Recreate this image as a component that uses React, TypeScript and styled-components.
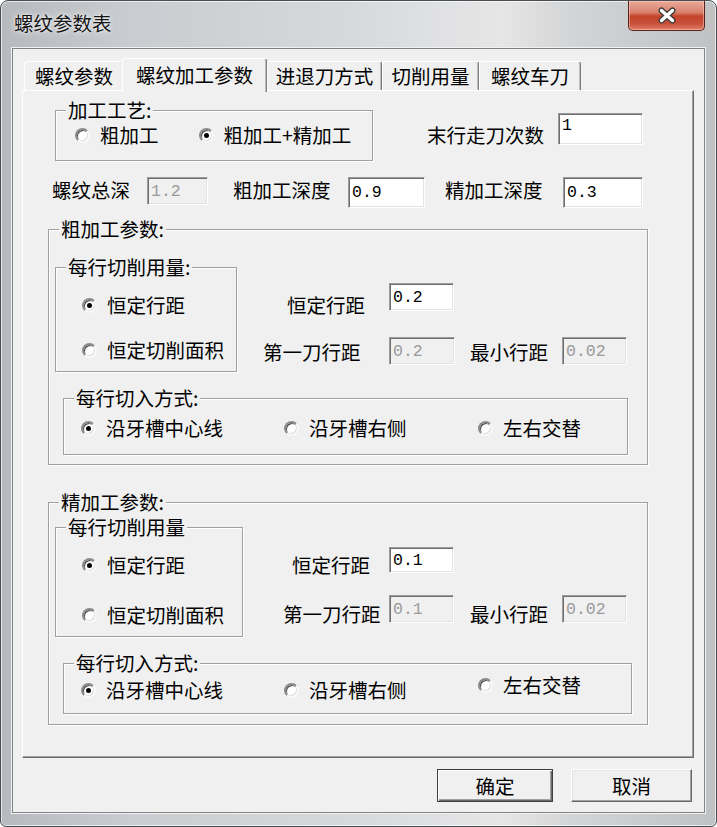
import React from 'react';
import styled, { createGlobalStyle, css } from 'styled-components';

const GlobalStyle = createGlobalStyle`
  *, *::before, *::after { box-sizing: border-box; }
  html, body { margin: 0; padding: 0; background: #ffffff; }
  body { font-family: 'Noto Sans CJK SC', 'Noto Sans', sans-serif; }
`;

const cjk = `'Noto Sans CJK SC', 'Noto Sans', sans-serif`;

const Window = styled.div`
  width: 717px;
  height: 827px;
  display: flex;
  flex-direction: column;
  border: 1px solid #4a4f54;
  border-radius: 8px 8px 6px 6px;
  background: linear-gradient(90deg, #b6babe 0%, #c9ccd0 18%, #d6d8da 48%, #e6e6e7 70%, #d3d4d5 80%, #bfc1c3 100%);
  box-shadow: inset 0 0 0 1px rgba(255, 255, 255, 0.65);
  overflow: hidden;
  color: #000;
  font-family: ${cjk};
  font-size: 19.5px;
`;

const TitleBar = styled.div`
  height: 47px;
  flex: none;
  display: flex;
  align-items: flex-start;
  padding-left: 13px;
`;

const Caption = styled.div`
  margin-top: 12px;
  line-height: 20px;
  color: #151515;
  text-shadow: 0 0 6px rgba(255, 255, 255, 0.95), 0 0 2px rgba(255, 255, 255, 0.9);
`;

const CloseButton = styled.div`
  margin-left: auto;
  margin-right: 11px;
  width: 77px;
  height: 30px;
  display: flex;
  align-items: center;
  justify-content: center;
  border: 1px solid #5b2219;
  border-top: none;
  border-radius: 0 0 5px 5px;
  background: linear-gradient(180deg, #e9a999 0%, #d9806c 40%, #c2442a 52%, #c9503a 78%, #e07e66 100%);
  box-shadow: inset 0 0 0 1px rgba(255, 210, 200, 0.5);
`;

const Client = styled.div`
  flex: 1;
  margin: 0 11px 13px 11px;
  padding: 9px 10px 0 9px;
  display: flex;
  flex-direction: column;
  background: #f0f0f0;
  border: 1px solid #808284;
  box-shadow: 0 0 0 1px #f2f2f2;
`;

const TabStrip = styled.div`
  display: flex;
  align-items: flex-end;
  height: 32px;
  padding-left: 2px;
  position: relative;
  z-index: 1;
`;

const Tab = styled.div<{ $w: number; $active?: boolean }>`
  width: ${(p) => p.$w}px;
  height: ${(p) => (p.$active ? 34 : 29)}px;
  margin-bottom: ${(p) => (p.$active ? -2 : 0)}px;
  margin-left: ${(p) => (p.$active ? -2 : 0)}px;
  padding-bottom: ${(p) => (p.$active ? 2 : 0)}px;
  display: flex;
  align-items: center;
  justify-content: center;
  line-height: 20px;
  white-space: nowrap;
  background: #f0f0f0;
  border-top: 1px solid #ffffff;
  border-left: 1px solid #ffffff;
  border-right: 1px solid #7c7c7c;
  border-radius: 3px 3px 0 0;
  box-shadow: inset -1px 0 0 #c0c0c0;
`;

const TabPanel = styled.div`
  height: 668px;
  flex: none;
  display: flex;
  flex-direction: column;
  align-items: flex-start;
  padding-left: 25px;
  background: #f0f0f0;
  border-top: 1px solid #ffffff;
  border-left: 1px solid #ffffff;
  border-right: 1px solid #696969;
  border-bottom: 1px solid #696969;
  box-shadow: inset -1px -1px 0 #a0a0a0;
`;

const GroupBox = styled.fieldset<{ $w: number; $ml?: number; $mt?: number; $pb?: number }>`
  width: ${(p) => p.$w}px;
  min-width: 0;
  margin: ${(p) => p.$mt ?? 0}px 0 0 ${(p) => p.$ml ?? 0}px;
  padding: 0 0 ${(p) => p.$pb ?? 0}px 0;
  border: 1px solid #a0a0a0;
  box-shadow: inset 1px 1px 0 #ffffff, 1px 1px 0 #ffffff;
`;

const Legend = styled.legend`
  margin-left: 10px;
  padding: 0 2px;
  height: 20px;
  line-height: 20px;
  background: #f0f0f0;
  white-space: nowrap;
`;

const ProcessRow = styled.div`
  display: flex;
  align-items: flex-start;
  margin-top: 9px;
  margin-left: 7px;
`;

const DepthRow = styled.div`
  display: flex;
  align-items: flex-start;
  margin-top: 16px;
`;

const SplitRow = styled.div<{ $mt: number }>`
  display: flex;
  align-items: flex-start;
  margin-top: ${(p) => p.$mt}px;
`;

const FieldColumn = styled.div`
  display: flex;
  flex-direction: column;
`;

const FieldRow = styled.div<{ $mt: number }>`
  display: flex;
  align-items: flex-start;
  margin-top: ${(p) => p.$mt}px;
`;

const Label = styled.span<{ $ml?: number; $mt?: number }>`
  margin-left: ${(p) => p.$ml ?? 0}px;
  margin-top: ${(p) => p.$mt ?? 0}px;
  line-height: 20px;
  white-space: nowrap;
`;

const Field = styled.input<{ $w: number; $h: number; $ml?: number; $mt?: number; $off?: boolean; $lift?: number }>`
  width: ${(p) => p.$w}px;
  height: ${(p) => p.$h}px;
  margin: ${(p) => p.$mt ?? 0}px 0 0 ${(p) => p.$ml ?? 0}px;
  padding: 0 0 ${(p) => p.$lift ?? 0}px 3px;
  border: 1px solid;
  border-color: #9c9c9c #ffffff #ffffff #9c9c9c;
  border-radius: 0;
  box-shadow: inset 1px 1px 0 #6e6e6e, inset -1px -1px 0 #e3e3e3;
  background: ${(p) => (p.$off ? '#f0f0f0' : '#ffffff')};
  color: ${(p) => (p.$off ? '#9a9a9a' : '#000000')};
  font-family: 'Liberation Mono', 'DejaVu Sans Mono', monospace;
  font-size: 16.5px;
  outline: none;
`;

const RadioLine = styled.div`
  display: flex;
  padding: 5px 0 15px 19px;
`;

const RadioColumn = styled.div<{ $gap: number }>`
  display: flex;
  flex-direction: column;
  gap: ${(p) => p.$gap}px;
  padding: 18px 0 11px 26px;
`;

const EntryGrid = styled.div<{ $pt: number; $pb: number }>`
  display: grid;
  grid-template-columns: 203px 194px auto;
  align-items: start;
  padding: ${(p) => p.$pt}px 0 ${(p) => p.$pb}px 17px;
`;

const RadioItem = styled.label<{ $ml?: number; $dy?: number }>`
  display: inline-flex;
  align-items: center;
  gap: 10px;
  height: 20px;
  line-height: 20px;
  margin-left: ${(p) => p.$ml ?? 0}px;
  margin-top: ${(p) => p.$dy ?? 0}px;
  white-space: nowrap;
`;

const RadioMark = styled.span<{ $checked?: boolean }>`
  flex: none;
  width: 15px;
  height: 15px;
  display: flex;
  align-items: center;
  justify-content: center;
  border-radius: 50%;
  background: #ffffff;
  border: 2px solid;
  border-color: #8a8a8a #f8f8f8 #f8f8f8 #8a8a8a;
  box-shadow: inset 1px 1px 0 #4a4a4a, inset -1px -1px 0 #dcdcdc;

  &::after {
    content: '';
    display: ${(p) => (p.$checked ? 'block' : 'none')};
    width: 5px;
    height: 5px;
    border-radius: 50%;
    background: #000000;
  }
`;

const ButtonRow = styled.div`
  display: flex;
  justify-content: flex-end;
  gap: 18px;
  margin-top: 11px;
  padding-right: 2px;
`;

const DialogButton = styled.button<{ $w: number; $default?: boolean }>`
  width: ${(p) => p.$w}px;
  height: 33px;
  padding: 0;
  font-family: ${cjk};
  font-size: 19.5px;
  line-height: 20px;
  color: #000;
  background: #f0f0f0;
  border: 1px solid;
  border-color: #ffffff #696969 #696969 #ffffff;
  box-shadow: inset -1px -1px 0 #a0a0a0, inset 1px 1px 0 #e3e3e3;

  ${(p) =>
    p.$default &&
    css`
      border-color: #3e3e3e;
      box-shadow: inset 1px 1px 0 #ffffff, inset -1px -1px 0 #696969, inset -2px -2px 0 #a0a0a0;
    `}
`;

type RadioProps = { checked?: boolean; ml?: number; dy?: number; children: React.ReactNode };

const Radio = ({ checked, ml, dy, children }: RadioProps) => (
  <RadioItem $ml={ml} $dy={dy}>
    <RadioMark $checked={checked} />
    {children}
  </RadioItem>
);

const CloseGlyph = () => (
  <svg width="22" height="17" viewBox="0 0 22 17">
    <path d="M5.5 3.5 L16.5 13.5 M16.5 3.5 L5.5 13.5" stroke="#3a3a3a" strokeWidth="6" strokeLinecap="round" />
    <path d="M5.5 3.5 L16.5 13.5 M16.5 3.5 L5.5 13.5" stroke="#ffffff" strokeWidth="3.4" strokeLinecap="round" />
  </svg>
);

const tabs = [
  { label: '螺纹参数', w: 100 },
  { label: '螺纹加工参数', w: 145, active: true },
  { label: '进退刀方式', w: 115 },
  { label: '切削用量', w: 97 },
  { label: '螺纹车刀', w: 102 },
];

export default function App() {
  return (
    <>
      <GlobalStyle />
      <Window>
        <TitleBar>
          <Caption>螺纹参数表</Caption>
          <CloseButton>
            <CloseGlyph />
          </CloseButton>
        </TitleBar>

        <Client>
          <TabStrip>
            {tabs.map((t) => (
              <Tab key={t.label} $w={t.w} $active={t.active}>
                {t.label}
              </Tab>
            ))}
          </TabStrip>

          <TabPanel>
            <ProcessRow>
              <GroupBox $w={318}>
                <Legend>加工工艺:</Legend>
                <RadioLine>
                  <Radio>粗加工</Radio>
                  <Radio checked ml={40}>
                    粗加工+精加工
                  </Radio>
                </RadioLine>
              </GroupBox>
              <Label $ml={54} $mt={25}>
                末行走刀次数
              </Label>
              <Field $w={85} $h={32} $ml={14} $mt={13} $lift={8} readOnly defaultValue="1" />
            </ProcessRow>

            <DepthRow>
              <Label $ml={4} $mt={3}>
                螺纹总深
              </Label>
              <Field $w={61} $h={28} $ml={17} $off readOnly defaultValue="1.2" />
              <Label $ml={25} $mt={3}>
                粗加工深度
              </Label>
              <Field $w={77} $h={31} $ml={17.5} readOnly defaultValue="0.9" />
              <Label $ml={20} $mt={3}>
                精加工深度
              </Label>
              <Field $w={80} $h={31} $ml={20.5} readOnly defaultValue="0.3" />
            </DepthRow>

            {/* 粗加工参数 */}
            <GroupBox $w={600} $mt={11} $pb={9}>
              <Legend>粗加工参数:</Legend>
              <SplitRow $mt={18}>
                <GroupBox $w={182} $ml={6}>
                  <Legend>每行切削用量:</Legend>
                  <RadioColumn $gap={25}>
                    <Radio checked>恒定行距</Radio>
                    <Radio>恒定切削面积</Radio>
                  </RadioColumn>
                </GroupBox>
                <FieldColumn>
                  <FieldRow $mt={26}>
                    <Label $ml={50} $mt={12}>
                      恒定行距
                    </Label>
                    <Field $w={65} $h={28} $ml={24} readOnly defaultValue="0.2" />
                  </FieldRow>
                  <FieldRow $mt={22}>
                    <Label $ml={26} $mt={5}>
                      第一刀行距
                    </Label>
                    <Field $w={66} $h={28} $ml={28.5} $off readOnly defaultValue="0.2" />
                    <Label $ml={15} $mt={5}>
                      最小行距
                    </Label>
                    <Field $w={65} $h={28} $ml={14} $off readOnly defaultValue="0.02" />
                  </FieldRow>
                </FieldColumn>
              </SplitRow>
              <GroupBox $w={565} $ml={14} $mt={16}>
                <Legend>每行切入方式:</Legend>
                <EntryGrid $pt={10} $pb={16}>
                  <Radio checked>沿牙槽中心线</Radio>
                  <Radio>沿牙槽右侧</Radio>
                  <Radio>左右交替</Radio>
                </EntryGrid>
              </GroupBox>
            </GroupBox>

            {/* 精加工参数 */}
            <GroupBox $w={600} $mt={27} $pb={10}>
              <Legend>精加工参数:</Legend>
              <SplitRow $mt={5}>
                <GroupBox $w={188} $ml={6}>
                  <Legend>每行切削用量</Legend>
                  <RadioColumn $gap={30}>
                    <Radio checked>恒定行距</Radio>
                    <Radio>恒定切削面积</Radio>
                  </RadioColumn>
                </GroupBox>
                <FieldColumn>
                  <FieldRow $mt={30}>
                    <Label $ml={49} $mt={8}>
                      恒定行距
                    </Label>
                    <Field $w={65} $h={26} $ml={19} readOnly defaultValue="0.1" />
                  </FieldRow>
                  <FieldRow $mt={20}>
                    <Label $ml={40} $mt={9}>
                      第一刀行距
                    </Label>
                    <Field $w={65} $h={28} $ml={8.5} $off readOnly defaultValue="0.1" />
                    <Label $ml={16} $mt={9}>
                      最小行距
                    </Label>
                    <Field $w={65} $h={28} $ml={14} $off readOnly defaultValue="0.02" />
                  </FieldRow>
                </FieldColumn>
              </SplitRow>
              <GroupBox $w={569} $ml={14} $mt={16}>
                <Legend>每行切入方式:</Legend>
                <EntryGrid $pt={7} $pb={13}>
                  <Radio checked>沿牙槽中心线</Radio>
                  <Radio>沿牙槽右侧</Radio>
                  <Radio dy={-5}>左右交替</Radio>
                </EntryGrid>
              </GroupBox>
            </GroupBox>
          </TabPanel>

          <ButtonRow>
            <DialogButton $w={116} $default>
              确定
            </DialogButton>
            <DialogButton $w={121}>取消</DialogButton>
          </ButtonRow>
        </Client>
      </Window>
    </>
  );
}
